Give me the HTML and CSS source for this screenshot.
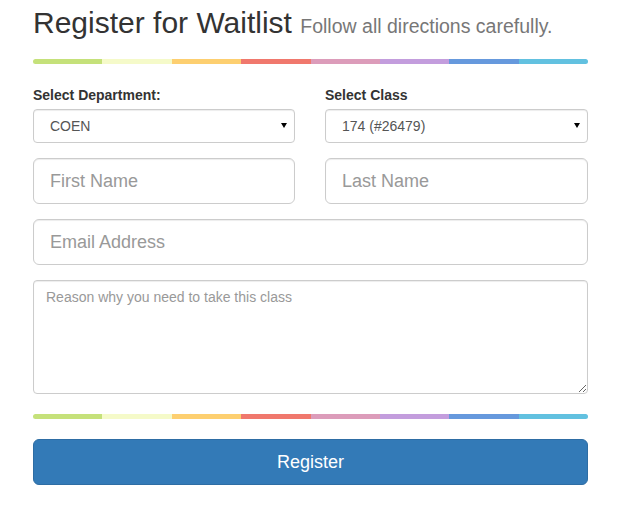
FILE: index.html
```html
<!DOCTYPE html>
<html>
<head>
<meta charset="utf-8">
<link rel="stylesheet" href="styles.css">
</head>
<body>
<div class="page">
  <h2 class="title">Register for Waitlist <small class="subtitle">Follow all directions carefully.</small></h2>
  <div class="rainbow">
    <span class="c1"></span><span class="c2"></span><span class="c3"></span><span class="c4"></span>
    <span class="c5"></span><span class="c6"></span><span class="c7"></span><span class="c8"></span>
  </div>
  <form class="form">
    <div class="row">
      <div class="field">
        <label class="label">Select Department:</label>
        <div class="select-wrap">
          <select class="control select"><option>COEN</option></select>
        </div>
      </div>
      <div class="field">
        <label class="label">Select Class</label>
        <div class="select-wrap">
          <select class="control select"><option>174 (#26479)</option></select>
        </div>
      </div>
    </div>
    <div class="row">
      <input class="control lg" type="text" placeholder="First Name">
      <input class="control lg" type="text" placeholder="Last Name">
    </div>
    <input class="control lg" type="email" placeholder="Email Address">
    <textarea class="control area" rows="5" placeholder="Reason why you need to take this class"></textarea>
    <div class="rainbow bottom">
      <span class="c1"></span><span class="c2"></span><span class="c3"></span><span class="c4"></span>
      <span class="c5"></span><span class="c6"></span><span class="c7"></span><span class="c8"></span>
    </div>
    <button type="button" class="btn">Register</button>
  </form>
</div>
</body>
</html>
```
FILE: styles.css
```css
* { box-sizing: border-box; }
html, body { margin: 0; padding: 0; background: #fff; }
body {
  font-family: "Liberation Sans", Arial, sans-serif;
  font-size: 14px;
  line-height: 1.42857;
  color: #333;
}
.page {
  width: 555px;
  margin-left: 33px;
  padding-top: 6px;
}
.title {
  margin: 0;
  font-size: 30px;
  font-weight: 500;
  line-height: 33px;
  color: #333;
  white-space: nowrap;
}
.subtitle {
  font-size: 19.5px;
  color: #777;
  font-weight: 400;
}
.rainbow {
  display: flex;
  height: 5px;
  border-radius: 3px;
  overflow: hidden;
  margin-top: 16px;
}
.rainbow span { flex: 1; }
.c1 { background: #c5e17a; }
.c2 { background: #f5fac9; }
.c3 { background: #fdcf70; }
.c4 { background: #f0786d; }
.c5 { background: #dc9cba; }
.c6 { background: #c39ddd; }
.c7 { background: #6699dd; }
.c8 { background: #62c1e0; }
.form {
  display: flex;
  flex-direction: column;
  gap: 15px;
  margin-top: 21px;
}
.row {
  display: grid;
  grid-template-columns: 262px 263px;
  column-gap: 30px;
}
.field { display: flex; flex-direction: column; }
.label {
  font-weight: 700;
  font-size: 14px;
  line-height: 20px;
  margin-bottom: 4px;
  color: #333;
}
.control {
  display: block;
  width: 100%;
  font-family: "Liberation Sans", Arial, sans-serif;
  color: #555;
  background: #fff;
  border: 1px solid #ccc;
  border-radius: 4px;
  box-shadow: inset 0 1px 1px rgba(0,0,0,0.075);
  outline: none;
  margin: 0;
}
.control::placeholder { color: #999; opacity: 1; }
.select-wrap { position: relative; }
.select-wrap::after {
  content: "";
  position: absolute;
  right: 8px;
  top: 14px;
  border-left: 3px solid transparent;
  border-right: 3px solid transparent;
  border-top: 5px solid #000;
}
.select {
  -webkit-appearance: none;
  appearance: none;
  height: 34px;
  padding: 6px 16px;
  font-size: 14px;
  line-height: 20px;
}
.lg {
  height: 46px;
  padding: 10px 16px;
  font-size: 18px;
  line-height: 24px;
  border-radius: 6px;
}
.area {
  height: 114px;
  padding: 6px 12px;
  font-size: 14px;
  line-height: 20px;
  resize: vertical;
}
.rainbow.bottom { margin-top: 5px; }
.btn {
  margin-top: 5px;
  height: 46px;
  width: 100%;
  border: 1px solid #2e6da4;
  background: #337ab7;
  color: #fff;
  font-family: "Liberation Sans", Arial, sans-serif;
  font-size: 18px;
  line-height: 24px;
  border-radius: 6px;
  padding: 10px 16px;
}
```
